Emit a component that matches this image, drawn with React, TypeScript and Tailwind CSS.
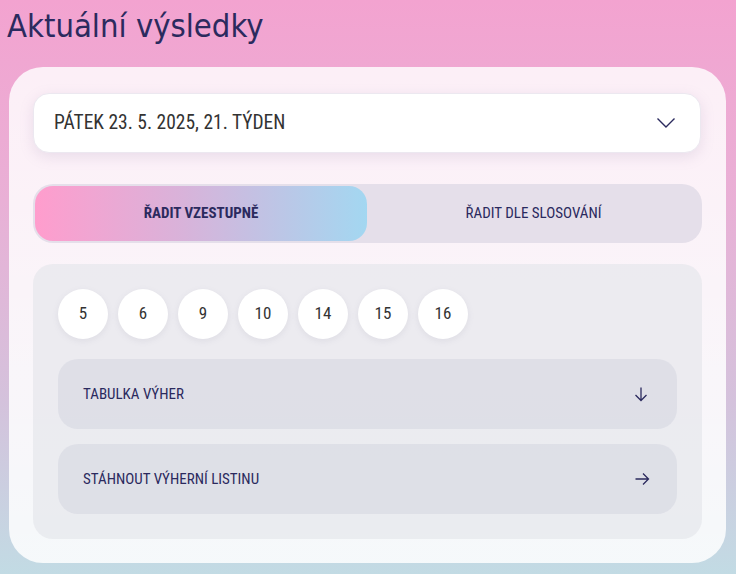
import { useState } from 'react'

const CISLA = [5, 6, 9, 10, 14, 15, 16]

const condensed = { fontFamily: '"Roboto Condensed", "Liberation Sans Narrow", Roboto, sans-serif' }

function Chevron() {
  return (
    <svg width="20" height="12" viewBox="0 0 20 12" fill="none" stroke="#2b2a5e" strokeWidth="1.4">
      <path d="M1.5 1.5 L10 10 L18.5 1.5" />
    </svg>
  )
}

function ArrowDown() {
  return (
    <svg width="16" height="16" viewBox="0 0 16 16" fill="none" stroke="#2b2a5e" strokeWidth="1.3">
      <path d="M8 1.5 V14.5 M2.5 9 L8 14.5 L13.5 9" />
    </svg>
  )
}

function ArrowRight() {
  return (
    <svg width="16" height="16" viewBox="0 0 16 16" fill="none" stroke="#2b2a5e" strokeWidth="1.3">
      <path d="M1.5 8 H14.5 M9 2.5 L14.5 8 L9 13.5" />
    </svg>
  )
}

export default function App() {
  const [razeni, setRazeni] = useState<'vzestupne' | 'slosovani'>('vzestupne')

  return (
    <div className="w-[736px] h-[574px] overflow-hidden bg-[linear-gradient(180deg,#f3a3d0_0%,#e9b0d6_35%,#d4c2dc_70%,#c2dbe4_100%)] px-[9px] pt-[6px]">
      <h1
        className="text-[32.5px] leading-[40px] text-[#2b2a5e] -ml-[2px] mb-[21px]"
        style={{ fontFamily: '"DejaVu Sans Condensed", "DejaVu Sans", Verdana, sans-serif' }}
      >
        Aktuální výsledky
      </h1>

      <div className="w-[717px] h-[496px] rounded-[34px] bg-[linear-gradient(180deg,rgba(255,255,255,0.82)_0%,rgba(255,255,255,0.86)_60%,rgba(255,255,255,0.84)_100%)] px-[24px] pt-[26px]">
        <button
          className="w-[668px] h-[60px] rounded-[16px] bg-white shadow-[0_4px_14px_rgba(150,130,170,0.18)] border border-[#ece8f0] flex items-center justify-between pl-[20px] pr-[24px]"
        >
          <span className="text-[19.5px] text-[#333333]" style={condensed}>
            PÁTEK 23. 5. 2025, 21. TÝDEN
          </span>
          <Chevron />
        </button>

        <div className="mt-[31px] w-[669px] h-[59px] rounded-[20px] bg-[#e5dfea] p-[2px] flex">
          <button
            onClick={() => setRazeni('vzestupne')}
            className={
              razeni === 'vzestupne'
                ? 'w-[332px] h-full rounded-[18px] bg-[linear-gradient(90deg,#ff9dcd_0%,#d8b3da_45%,#a3d7f1_100%)] text-[15px] font-bold text-[#2b2a5e]'
                : 'w-[332px] h-full rounded-[18px] text-[15px] text-[#2b2a5e]'
            }
            style={condensed}
          >
            ŘADIT VZESTUPNĚ
          </button>
          <button
            onClick={() => setRazeni('slosovani')}
            className={
              razeni === 'slosovani'
                ? 'flex-1 h-full rounded-[18px] bg-[linear-gradient(90deg,#ff9dcd_0%,#d8b3da_45%,#a3d7f1_100%)] text-[15px] font-bold text-[#2b2a5e]'
                : 'flex-1 h-full rounded-[18px] text-[15px] text-[#2b2a5e]'
            }
            style={condensed}
          >
            ŘADIT DLE SLOSOVÁNÍ
          </button>
        </div>

        <div className="mt-[21px] w-[669px] rounded-[20px] bg-[rgba(226,228,234,0.6)] p-[25px]">
          <div className="flex gap-[10px]">
            {CISLA.map((c) => (
              <div
                key={c}
                className="w-[50px] h-[50px] rounded-full bg-white shadow-[0_2px_6px_rgba(120,120,150,0.12)] flex items-center justify-center text-[17px] text-[#333333]"
                style={condensed}
              >
                {c}
              </div>
            ))}
          </div>

          <div className="mt-[20px] flex flex-col gap-[15px]">
            <div className="h-[70px] rounded-[20px] bg-[rgba(215,217,226,0.62)] flex items-center justify-between pl-[25px] pr-[28px]">
              <span className="text-[15px] text-[#2b2a5e]" style={condensed}>TABULKA VÝHER</span>
              <ArrowDown />
            </div>
            <div className="h-[70px] rounded-[20px] bg-[rgba(215,217,226,0.62)] flex items-center justify-between pl-[25px] pr-[27px]">
              <span className="text-[15px] text-[#2b2a5e]" style={condensed}>STÁHNOUT VÝHERNÍ LISTINU</span>
              <ArrowRight />
            </div>
          </div>
        </div>
      </div>
    </div>
  )
}
